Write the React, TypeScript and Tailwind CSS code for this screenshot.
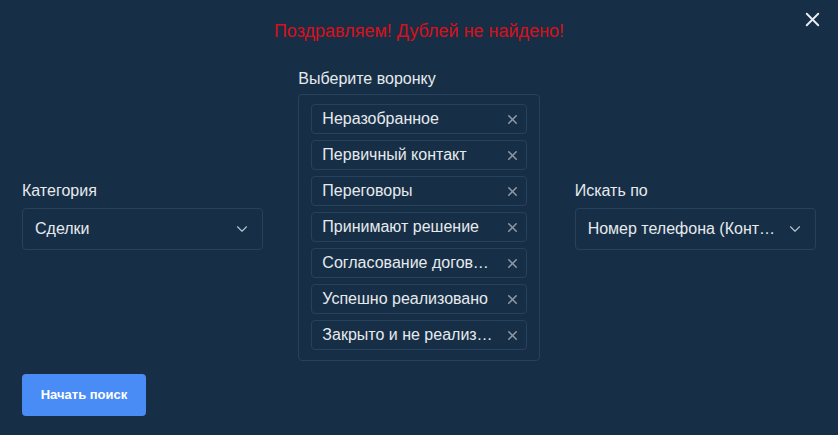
import React from 'react';
import { ChevronDown, X } from 'lucide-react';

const funnels = [
  'Неразобранное',
  'Первичный контакт',
  'Переговоры',
  'Принимают решение',
  'Согласование договора',
  'Успешно реализовано',
  'Закрыто и не реализовано',
];

const Select: React.FC<{ value: string }> = ({ value }) => (
  <div className="flex h-[42px] items-center gap-2 rounded border border-[#27425c] pl-3 pr-[11px]">
    <span className="flex-1 truncate text-[16px] text-[#e6eaee]">{value}</span>
    <ChevronDown size={18} strokeWidth={1.5} className="shrink-0 text-[#b8c2cc]" />
  </div>
);

const App: React.FC = () => {
  return (
    <div
      className="relative h-[435px] w-[838px] overflow-hidden bg-[#172f46] px-[22px] pt-[18px]"
      style={{ fontFamily: '"Liberation Sans", Arial, sans-serif' }}
    >
      <button className="absolute right-[14px] top-[8px] text-[#e9edf1]">
        <X size={23} strokeWidth={2} />
      </button>

      <h2 className="text-center text-[18px] text-[#d7101c]">
        Поздравляем! Дублей не найдено!
      </h2>

      <div className="mt-[22px] grid grid-cols-3 items-center gap-[35px]">
        <div>
          <p className="mb-[5px] text-[16px] text-[#e6eaee]">Категория</p>
          <Select value="Сделки" />
        </div>

        <div>
          <p className="mb-[3px] text-[16px] text-[#e6eaee]">Выберите воронку</p>
          <div className="flex flex-col gap-[6px] rounded border border-[#27425c] px-[12px] pb-[10px] pt-[9px]">
            {funnels.map((f) => (
              <div
                key={f}
                className="flex h-[30px] items-center gap-2 rounded border border-[#27425c] pl-[10px] pr-[6px]"
              >
                <span className="flex-1 truncate text-[16px] text-[#e6eaee]">{f}</span>
                <X size={15} strokeWidth={2.5} className="shrink-0 text-[#8b97a4]" />
              </div>
            ))}
          </div>
        </div>

        <div>
          <p className="mb-[5px] text-[16px] text-[#e6eaee]">Искать по</p>
          <Select value="Номер телефона (Контакт)" />
        </div>
      </div>

      <button className="mt-[13px] h-[42px] w-[124px] rounded bg-[#4a8cf6] text-[13px] font-bold text-white">
        Начать поиск
      </button>
    </div>
  );
};

export default App;
